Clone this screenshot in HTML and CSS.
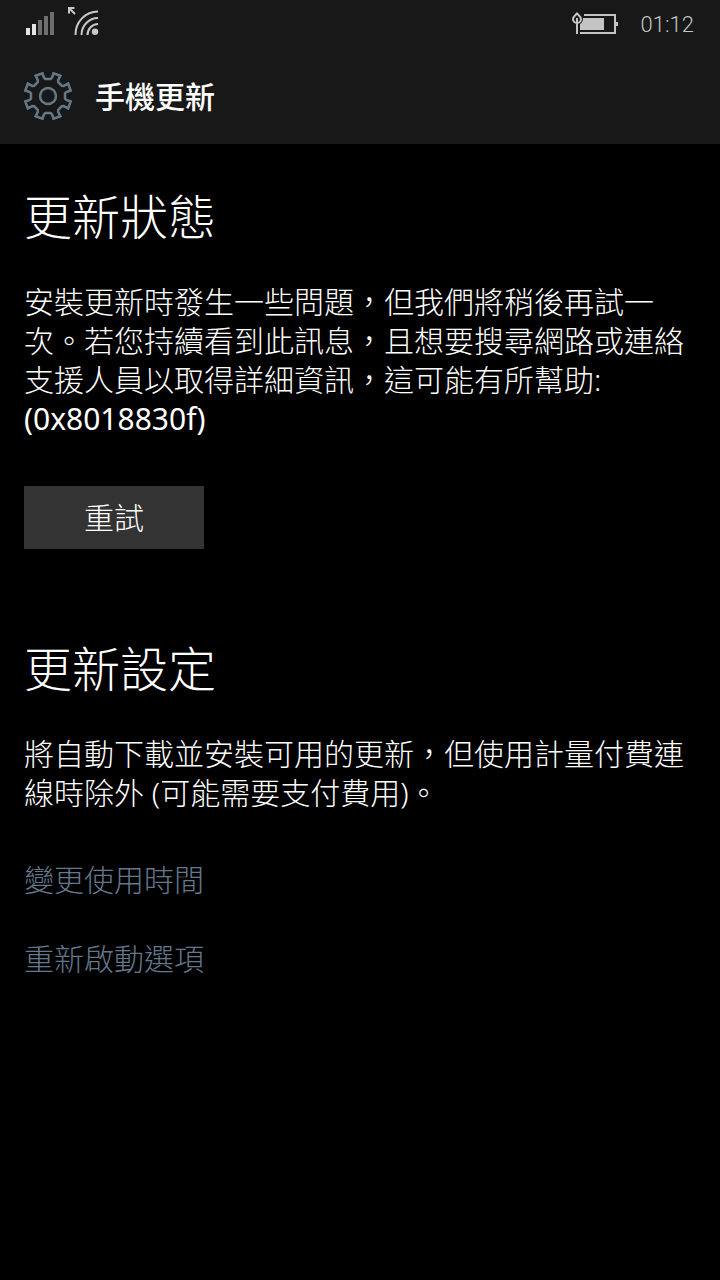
FILE: index.html
```html
<!DOCTYPE html>
<html lang="zh-Hant">
<head>
    <meta charset="UTF-8">
    <meta name="viewport" content="width=device-width, initial-scale=1.0">
    <title>手機更新</title>
    <link rel="stylesheet" href="styles.css">
</head>
<body>
    <header class="top">
        <div class="status-bar">
            <svg class="status-icon" width="76" height="32" viewBox="26 4 76 32" aria-hidden="true">
                <path fill="#e4e4e4" d="M26 28h4v7h-4zM32 24h4v11h-4z"/>
                <path fill="#6e6e6e" d="M38 20h4v15h-4zM44 16h4v19h-4zM50 12h4v23h-4z"/>
                <g fill="none" stroke="#c8c8c8" stroke-width="2">
                    <path d="M75.500 35A22.500 23 0 0 1 98 11.500M81.500 35A16.500 17 0 0 1 98 18M87.500 35A10.500 11 0 0 1 98 24"/>
                    <path d="M75 14L69.500 8.500M69 13.500V8h5.500"/>
                </g>
                <circle cx="95" cy="31.700" r="3.200" fill="#c8c8c8"/>
            </svg>
            <div class="status-right">
                <svg class="status-icon" width="48" height="32" viewBox="571 8 48 32" aria-hidden="true">
                    <path fill="none" stroke="#c4c4c4" stroke-width="2" d="M584 15h31v18h-35"/>
                    <path fill="#c4c4c4" d="M616 22h2v4h-2zM580 18h24v12h-24z"/>
                    <path fill="#c4c4c4" stroke="#181818" stroke-width="4" d="M577 13c-2 2-4 3.500-4 6 0 2.200 1.800 4 4 4s4-1.800 4-4c0-2.500-2-4-4-6z"/>
                    <path fill="#181818" stroke="#c4c4c4" stroke-width="2" d="M577 13.500c-2 2-4 3.200-4 5.500 0 2.200 1.800 4 4 4s4-1.800 4-4c0-2.300-2-3.500-4-5.500z"/>
                    <path stroke="#c4c4c4" stroke-width="2" d="M577 18v16"/>
                </svg>
                <span class="clock">01:12</span>
            </div>
        </div>
        <div class="title-bar">
            <svg class="gear" width="48" height="48" viewBox="-24 -24 48 48" aria-hidden="true">
                <path d="M-5.500-22.700L-4-18.300-2.500-17H2.500L4-18.300 5.500-22.700 12.400-20.200 10.100-15.800 10.300-13.800 13.800-10.300 15.800-10.100 20.200-12.400 22.700-5.500 18.300-4 17-2.500V2.500L18.300 4 22.700 5.500 20.200 12.400 15.800 10.100 13.800 10.300 10.300 13.800 10.100 15.800 12.400 20.200 5.500 22.700 4 18.300 2.500 17H-2.500L-4 18.300-5.500 22.700-12.400 20.200-10.100 15.800-10.300 13.800-13.800 10.300-15.800 10.100-20.200 12.400-22.700 5.500-18.300 4-17 2.500V-2.500L-18.300-4-22.700-5.500-20.200-12.400-15.800-10.100-13.800-10.300-10.300-13.800-10.100-15.800-12.400-20.200z"/>
                <circle r="8"/>
            </svg>
            <h1 class="title">手機更新</h1>
        </div>
    </header>
    <main class="content">
        <section class="section">
            <h2 class="heading">更新狀態</h2>
            <p class="text">安裝更新時發生一些問題，但我們將稍後再試一次。若您持續看到此訊息，且想要搜尋網路或連絡支援人員以取得詳細資訊，這可能有所幫助: <span class="code">(0x8018830f)</span></p>
            <button class="retry" type="button">重試</button>
        </section>
        <section class="section">
            <h2 class="heading">更新設定</h2>
            <p class="text">將自動下載並安裝可用的更新，但使用計量付費連線時除外 (可能需要支付費用)。</p>
            <nav class="links">
                <a class="link" href="#">變更使用時間</a>
                <a class="link" href="#">重新啟動選項</a>
            </nav>
        </section>
    </main>
</body>
</html>
```
FILE: styles.css
```css
* {
    box-sizing: border-box;
}
body {
    margin: 0;
    min-height: 100vh;
    background-color: #000;
    color: #fff;
    font-family: "Noto Sans", "Noto Sans CJK TC", sans-serif;
    font-size: 30px;
    font-weight: 300;
    line-height: 39px;
}
.top {
    background-color: #181818;
}
.status-bar {
    display: flex;
    align-items: center;
    justify-content: space-between;
    height: 48px;
    padding: 0 26px;
}
.status-icon {
    display: block;
}
.status-bar > .status-icon {
    margin-bottom: 8px;
}
.status-right {
    display: flex;
    align-items: center;
    gap: 22px;
}
.clock {
    color: #c4c4c4;
    font-family: Roboto, sans-serif;
    font-size: 22px;
}
.title-bar {
    display: flex;
    align-items: center;
    gap: 23px;
    height: 96px;
    padding: 0 24px;
}
.gear {
    fill: none;
    stroke: #64788c;
    stroke-width: 2.5;
}
.title {
    margin: 0;
    font-size: 30px;
    font-weight: 500;
}
.content {
    padding: 41px 24px;
}
.section {
    margin-bottom: 88px;
}
.heading {
    margin: 0 0 33px;
    font-size: 48px;
    font-weight: 300;
    line-height: 64px;
}
.text {
    margin: 0;
}
.code {
    font-weight: 400;
}
/* 重試按鈕 */
.retry {
    display: block;
    min-width: 180px;
    height: 63px;
    margin-top: 48px;
    padding: 0 24px;
    border: 0;
    background-color: #333;
    color: #fff;
    font: inherit;
    cursor: pointer;
}
.links {
    display: flex;
    flex-direction: column;
    align-items: flex-start;
    gap: 40px;
    margin-top: 48px;
}
.link {
    color: #64788c;
    text-decoration: none;
}
```
